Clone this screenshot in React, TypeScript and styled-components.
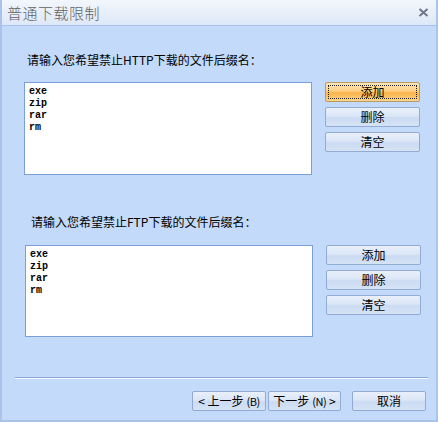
import React from 'react';
import styled, { createGlobalStyle } from 'styled-components';

const GlobalStyle = createGlobalStyle`
  html, body {
    margin: 0;
    padding: 0;
    background: #c3dafa;
  }
  body {
    font-family: 'Noto Sans CJK SC', 'Liberation Sans', sans-serif;
  }
`;

const Window = styled.div`
  width: 438px;
  height: 422px;
  box-sizing: border-box;
  display: flex;
  flex-direction: column;
  background: #c3dafa;
  border-left: 2px solid #a9c3ea;
  border-right: 2px solid #aac4ea;
  border-bottom: 2px solid #a9c3ea;
`;

const TitleBar = styled.div`
  height: 25px;
  flex: none;
  display: flex;
  align-items: center;
  justify-content: space-between;
  padding: 0 7px 0 5px;
  background: linear-gradient(#f3f6fc, #dde8f7);
  border-bottom: 1px solid #a8c3ea;
`;

const Title = styled.span`
  font-size: 15px;
  line-height: 25px;
  color: #636363;
  font-weight: 300;
  letter-spacing: 0.5px;
`;

const CloseIcon = styled.svg`
  width: 11px;
  height: 9px;
`;

const Content = styled.div`
  flex: 1;
  display: flex;
  flex-direction: column;
  padding: 0 0 0 22px;
`;

const Label = styled.div<{ $top: number; $indent: number }>`
  margin-top: ${({ $top }) => $top}px;
  margin-left: ${({ $indent }) => $indent}px;
  font-size: 12px;
  line-height: 14px;
  height: 14px;
  color: #000;
`;

const Row = styled.div<{ $top: number; $shift: number }>`
  display: flex;
  align-items: flex-start;
  margin-top: ${({ $top }) => $top}px;
  margin-left: ${({ $shift }) => $shift}px;
`;

const ListBox = styled.textarea<{ $h: number }>`
  box-sizing: border-box;
  width: 288px;
  height: ${({ $h }) => $h}px;
  margin: 0;
  padding: 3px 4px;
  border: 1px solid #7b9fdb;
  background: #fff;
  resize: none;
  outline: none;
  font-family: 'Liberation Mono', 'DejaVu Sans Mono', monospace;
  font-size: 10px;
  font-weight: bold;
  line-height: 12px;
  color: #000;
  overflow: hidden;
`;

const ButtonColumn = styled.div`
  display: flex;
  flex-direction: column;
  gap: 5px;
  margin-left: 13px;
`;

const Button = styled.button<{ $primary?: boolean; $w?: number }>`
  box-sizing: border-box;
  width: ${({ $w }) => $w ?? 95}px;
  height: 20px;
  margin: 0;
  padding: 0;
  border: 1px solid ${({ $primary }) => ($primary ? '#b89b6a' : '#92abd2')};
  border-radius: 2px;
  background: ${({ $primary }) =>
    $primary
      ? 'linear-gradient(#fde7b8 0%, #fccf82 45%, #f9b34a 55%, #fdd58e 100%)'
      : 'linear-gradient(#e9f0fb 0%, #dbe6f7 45%, #cbdbf2 55%, #d6e3f6 100%)'};
  font-family: 'Noto Sans CJK SC', 'Liberation Sans', sans-serif;
  font-size: 12px;
  line-height: 16px;
  color: #000;
  position: relative;
  display: flex;
  align-items: center;
  justify-content: center;
  gap: 3px;
  white-space: nowrap;
`;

const FocusRing = styled.span`
  position: absolute;
  inset: 2px;
  border: 1px dotted #222;
  pointer-events: none;
`;

const Footer = styled.div`
  display: flex;
  flex-direction: column;
  margin-top: 40px;
`;

const Separator = styled.div`
  margin-left: -9px;
  width: 413px;
  border-top: 1px solid #8aa7d6;
  border-bottom: 1px solid #f4f8ff;
`;

const FooterButtons = styled.div`
  display: flex;
  justify-content: flex-end;
  margin-top: 12px;
  margin-right: 10px;
  gap: 2px;
`;

const Spacer = styled.div`
  width: 7px;
`;

const Accel = styled.span`
  font-size: 11px;
  letter-spacing: -0.5px;
`;

const items = 'exe\nzip\nrar\nrm';

export default function App() {
  return (
    <>
      <GlobalStyle />
      <Window>
        <TitleBar>
          <Title>普通下载限制</Title>
          <CloseIcon viewBox="0 0 11 9">
            <path d="M1.5 1 L9.5 8 M9.5 1 L1.5 8" stroke="#6e7888" strokeWidth="2" />
          </CloseIcon>
        </TitleBar>
        <Content>
          <Label $top={27} $indent={3}>请输入您希望禁止HTTP下载的文件后缀名：</Label>
          <Row $top={15} $shift={0}>
            <ListBox $h={93} defaultValue={items} />
            <ButtonColumn>
              <Button $primary>
                <FocusRing />
                添加
              </Button>
              <Button>删除</Button>
              <Button>清空</Button>
            </ButtonColumn>
          </Row>
          <Label $top={40} $indent={7}>请输入您希望禁止FTP下载的文件后缀名：</Label>
          <Row $top={16} $shift={1}>
            <ListBox $h={92} defaultValue={items} />
            <ButtonColumn>
              <Button>添加</Button>
              <Button>删除</Button>
              <Button>清空</Button>
            </ButtonColumn>
          </Row>
          <Footer>
            <Separator />
            <FooterButtons>
              <Button $w={74}>
                &lt; 上一步<Accel>(B)</Accel>
              </Button>
              <Button $w={73}>
                下一步<Accel>(N)</Accel> &gt;
              </Button>
              <Spacer />
              <Button $w={74}>取消</Button>
            </FooterButtons>
          </Footer>
        </Content>
      </Window>
    </>
  );
}
